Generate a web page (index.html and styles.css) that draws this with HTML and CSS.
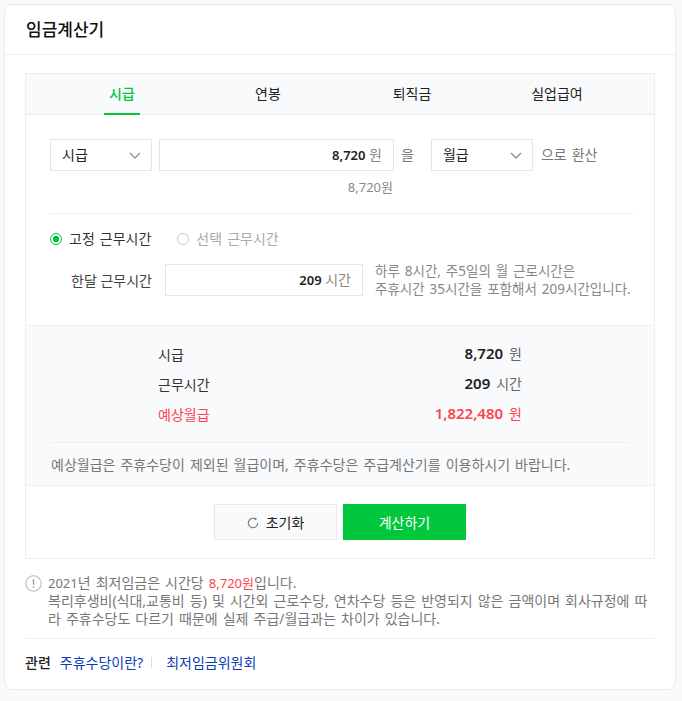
FILE: index.html
```html
<!DOCTYPE html>
<html lang="ko">
    <head>
        <meta charset="utf-8">
        <title>임금계산기</title>
        <link rel="stylesheet" href="styles.css">
    </head>
    <body>
        <div class="card">
            <h1 class="title">임금계산기</h1>
            <div class="content">
                <div class="calc">
                    <ul class="tabs">
                        <li class="tab"><span class="on">시급</span></li>
                        <li class="tab"><span>연봉</span></li>
                        <li class="tab"><span>퇴직금</span></li>
                        <li class="tab"><span>실업급여</span></li>
                    </ul>
                    <div class="form">
                        <div class="convert">
                            <div class="select first">시급
                                <svg class="chev" width="12" height="7" viewBox="0 0 12 7"><path d="M1 1l5 5 5-5" fill="none" stroke="#8b8f96" stroke-width="1.3"/></svg>
                            </div>
                            <div class="input amount"><b>8,720</b> <span>원</span></div>
                            <span class="word eul">을</span>
                            <div class="select second">월급
                                <svg class="chev" width="12" height="7" viewBox="0 0 12 7"><path d="M1 1l5 5 5-5" fill="none" stroke="#8b8f96" stroke-width="1.3"/></svg>
                            </div>
                            <span class="word">으로 환산</span>
                        </div>
                        <div class="echo">8,720원</div>
                        <div class="radios">
                            <label class="radio checked"><i></i>고정 근무시간</label>
                            <label class="radio"><i></i>선택 근무시간</label>
                        </div>
                        <div class="hours">
                            <span class="hours-label">한달 근무시간</span>
                            <div class="input hours-input"><b>209</b> <span>시간</span></div>
                            <p class="hours-desc">하루 8시간, 주5일의 월 근로시간은<br>주휴시간 35시간을 포함해서 209시간입니다.</p>
                        </div>
                    </div>
                    <div class="summary">
                        <dl class="rows">
                            <div class="row"><dt>시급</dt><dd><b>8,720</b><span>원</span></dd></div>
                            <div class="row"><dt>근무시간</dt><dd><b>209</b><span>시간</span></dd></div>
                            <div class="row red"><dt>예상월급</dt><dd><b>1,822,480</b><span>원</span></dd></div>
                        </dl>
                        <p class="summary-note">예상월급은 주휴수당이 제외된 월급이며, 주휴수당은 주급계산기를 이용하시기 바랍니다.</p>
                    </div>
                    <div class="buttons">
                        <button class="btn reset">
                            <svg width="12" height="12" viewBox="0 0 12 12"><path d="M8.6 2.1A4.7 4.7 0 1 0 10.7 6" fill="none" stroke="#777" stroke-width="1.1"/><path d="M7.6 0.2l2.6 1.7-2.6 1.7z" fill="#777"/></svg>
                            초기화
                        </button>
                        <button class="btn submit">계산하기</button>
                    </div>
                </div>
                <div class="notice">
                    <svg class="notice-icon" width="17" height="17" viewBox="0 0 17 17"><circle cx="8.5" cy="8.5" r="7.7" fill="none" stroke="#bbb" stroke-width="1.1"/><path d="M8.5 4.2v5.6" stroke="#999" stroke-width="1.4"/><path d="M8.5 11.2v1.5" stroke="#999" stroke-width="1.4"/></svg>
                    <p><span class="num">2021</span>년 최저임금은 시간당 <em>8,720원</em>입니다.<br>복리후생비(식대,교통비 등) 및 시간외 근로수당, 연차수당 등은 반영되지 않은 금액이며 회사규정에 따라 주휴수당도 다르기 때문에 실제 주급/월급과는 차이가 있습니다.</p>
                </div>
                <div class="related">
                    <strong>관련</strong>
                    <a href="#" class="sep">주휴수당이란?</a>
                    <a href="#">최저임금위원회</a>
                </div>
            </div>
        </div>
    </body>
</html>
```

FILE: styles.css
```css
html, body {
    height: 100%;
}
body {
    margin: 0;
    padding: 4px 6px 0 4px;
    box-sizing: border-box;
    background-color: #f8f9fb;
    font-family: "Noto Sans", "Noto Sans CJK KR", sans-serif;
    font-size: 14px;
    word-spacing: 1.4px;
    color: #222;
    overflow: hidden;
}

p, h1, ul, dl, dd {
    margin: 0;
    padding: 0;
}

.card {
    height: 686px;
    box-sizing: border-box;
    background-color: #fff;
    border: 1px solid #e9ebef;
    border-radius: 8px;
}

.title {
    height: 50px;
    box-sizing: border-box;
    padding-left: 21px;
    font-size: 17px;
    font-weight: 500;
    line-height: 50px;
    color: #111;
    border-bottom: 1px solid #eeeff2;
}

.content {
    padding: 18px 20px 0;
}

.calc {
    border: 1px solid #eceef1;
}

.tabs {
    display: grid;
    grid-template-columns: 140px 152px 136px 154px;
    height: 40px;
    padding: 0 0 0 26px;
    list-style: none;
    background-color: #f9fafc;
    border-bottom: 1px solid #e9ebf0;
}

.tab {
    display: flex;
    justify-content: center;
    line-height: 40px;
}

.tab span {
    box-sizing: border-box;
    height: 41px;
    padding: 0 5px;
}

.tab .on {
    color: #00c73c;
    font-weight: 500;
    border-bottom: 2px solid #00c73c;
}

.form {
    padding: 24px 20px 0 24px;
}

.convert {
    display: flex;
    align-items: center;
    height: 32px;
}

.select {
    position: relative;
    width: 102px;
    height: 32px;
    box-sizing: border-box;
    padding-left: 11px;
    line-height: 30px;
    border: 1px solid #e4e6ec;
}

.chev {
    position: absolute;
    top: 12px;
    right: 10px;
}

.first {
    margin-right: 7px;
}

.input {
    height: 32px;
    box-sizing: border-box;
    text-align: right;
    padding-right: 11px;
    line-height: 30px;
    word-spacing: 0;
    border: 1px solid #e4e6ec;
}

.input b {
    font-weight: 600;
    font-size: 13px;
    color: #222;
}

.input span {
    color: #888;
}

.amount {
    width: 235px;
}

.word {
    color: #777;
    margin-top: -3px;
}

.eul {
    margin: -3px 17px 0 7px;
}

.second {
    margin-right: 8px;
}

.echo {
    box-sizing: border-box;
    height: 43px;
    padding: 6px 241px 0 0;
    text-align: right;
    font-size: 13px;
    line-height: 20px;
    color: #888;
    border-bottom: 1px solid #eeeff2;
}

.radios {
    display: flex;
    gap: 26px;
    margin-top: 15px;
    line-height: 20px;
}

.radio {
    display: flex;
    align-items: center;
    color: #aaa;
}

.radio i {
    box-sizing: border-box;
    width: 12px;
    height: 12px;
    margin-right: 7px;
    border: 1px solid #ccc;
    border-radius: 50%;
}

.radio.checked {
    color: #333;
}

.radio.checked i {
    border-color: #00c73c;
    background: radial-gradient(circle, #00c73c 0 3px, #fff 3.5px);
}

.hours {
    display: flex;
    align-items: center;
    margin-top: 15px;
    height: 32px;
}

.hours-label {
    width: 115px;
    padding-left: 21px;
    box-sizing: border-box;
    color: #444;
    margin-top: -1px;
    word-spacing: 0;
    white-space: nowrap;
}

.hours-input {
    width: 198px;
}

.hours-desc {
    margin-left: 12px;
    font-size: 13.5px;
    line-height: 18px;
    color: #888;
    white-space: nowrap;
}

.summary {
    margin-top: 29px;
    height: 161px;
    box-sizing: border-box;
    background-color: #f9fafc;
    border-top: 1px solid #f1f2f4;
    border-bottom: 1px solid #eeeff2;
    padding: 14px 25px 0;
}

.rows {
    padding: 0 107px;
    height: 103px;
    box-sizing: border-box;
    border-bottom: 1px solid #eeeff2;
}

.row {
    display: flex;
    justify-content: space-between;
    height: 30px;
    line-height: 30px;
    color: #333;
}

.row dd {
    margin-top: -2px;
    color: #666;
}

.row b {
    font-size: 15px;
    font-weight: 600;
    color: #222;
    margin-right: 6px;
}

.row.red dt, .row.red dd, .row.red b {
    color: #ff424d;
}

.summary-note {
    margin-top: 12px;
    color: #777;
    line-height: 20px;
    white-space: nowrap;
}

.buttons {
    display: flex;
    justify-content: center;
    gap: 6px;
    padding: 18px 0;
}

.btn {
    width: 123px;
    height: 36px;
    font: inherit;
    word-spacing: inherit;
    border: 1px solid #e6e8ee;
    cursor: pointer;
}

.reset {
    background-color: #f9fafc;
    color: #222;
}

.reset svg {
    margin-right: 2px;
    vertical-align: -1px;
}

.submit {
    background-color: #00c73c;
    border-color: #00c73c;
    color: #fff;
}

.notice {
    display: flex;
    margin-top: 15px;
    padding-bottom: 10px;
    border-bottom: 1px solid #eeeff2;
}

.notice-icon {
    flex: none;
    margin: 1px 6px 0 0;
}

.notice p {
    line-height: 18px;
    color: #777;
}

.notice .num, .notice em {
    font-size: 13px;
}

.notice em {
    font-style: normal;
    color: #ff424d;
}

.related {
    display: flex;
    align-items: center;
    margin-top: 14px;
    line-height: 20px;
}

.related strong {
    font-weight: 500;
    margin-right: 9px;
}

.related a {
    color: #0a3cb4;
    text-decoration: none;
}

.sep:after {
    content: "";
    display: inline-block;
    height: 11px;
    margin: 0 14px 0 8px;
    border-left: 1px solid #ddd;
}
```
